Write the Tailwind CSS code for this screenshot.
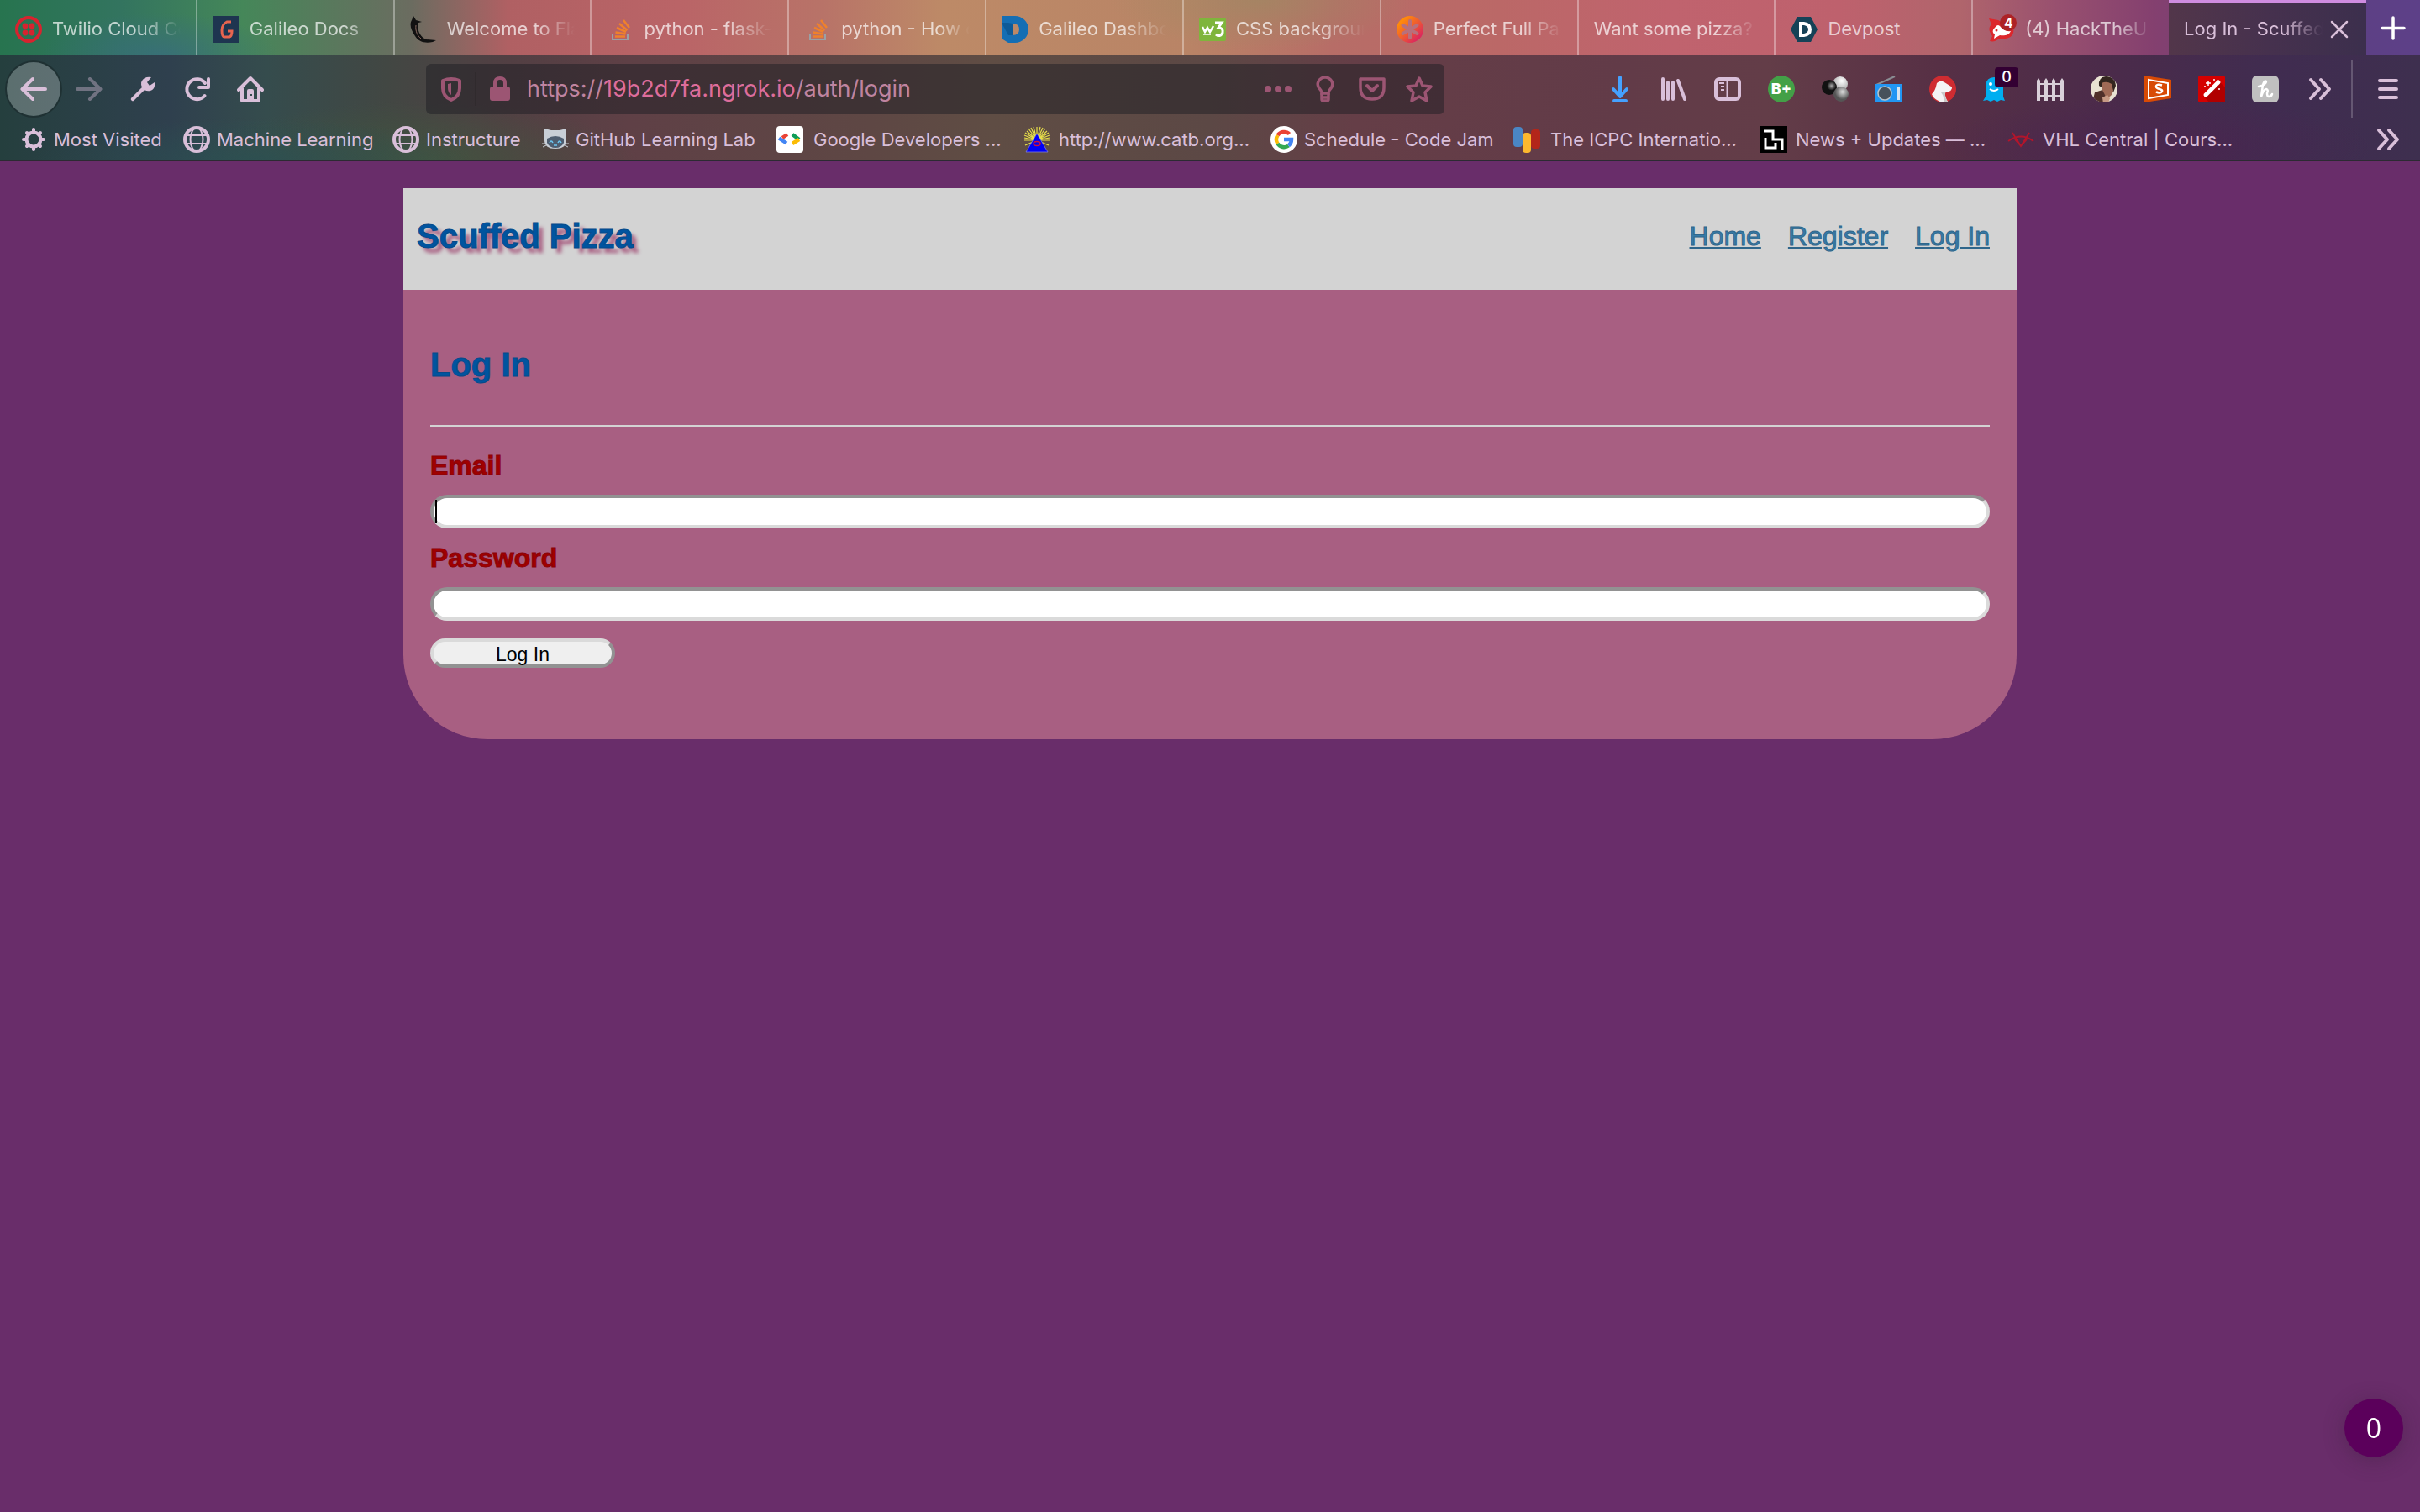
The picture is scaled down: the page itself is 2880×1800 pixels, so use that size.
<!DOCTYPE html>
<html lang="en">
<head>
  <meta charset="UTF-8" />
  <meta name="viewport" content="width=device-width, initial-scale=1.0" />
  <title>Log In - Scuffed Pizza</title>
  <script src="https://cdn.jsdelivr.net/npm/@tailwindcss/browser@4"></script>
</head>
<body class="min-h-screen bg-[#692d6a] font-['Liberation_Sans',Arial,sans-serif]">

  <!-- Browser window -->
  <header class="border-b-2 border-[#2c2a32] font-[Inter,sans-serif] text-[#d9bfd9]">

    <!-- Tabs -->
    <div class="flex h-[65px] bg-[radial-gradient(140px_50px_at_190px_65px,#386d7ccc,transparent),radial-gradient(180px_60px_at_1500px_0px,#9c8a62aa,transparent),linear-gradient(90deg,#27744f_0%,#33745f_5%,#458759_10%,#6b6c60_17%,#b06063_21%,#ba6467_28%,#b87368_34%,#bd8a67_39%,#b98466_49%,#b76d67_55%,#bb6867_62%,#c0636e_69%,#be616d_76%,#b0656c_81%,#98506f_85%,#84406f_89%,#5d4083_96%,#5d4088_100%)] text-[22px]">
      <div class="flex h-full min-w-0 flex-1">
        <button class="flex min-w-0 flex-1 basis-0 items-center gap-3 border-r-2 border-white/35 pt-1 pr-[18px] pl-[18px] text-left text-white/70">
          <svg class="size-8 shrink-0" viewBox="0 0 32 32" fill="#d8232f"><circle cx="16" cy="16" r="14" fill="none" stroke="#d8232f" stroke-width="4"/><circle cx="12" cy="12" r="3.4"/><circle cx="20" cy="12" r="3.4"/><circle cx="12" cy="20" r="3.4"/><circle cx="20" cy="20" r="3.4"/></svg>
          <span class="min-w-0 flex-1 overflow-hidden whitespace-nowrap [mask-image:linear-gradient(to_right,#000_70%,transparent)]">Twilio Cloud Co</span>
        </button>
        <button class="flex min-w-0 flex-1 basis-0 items-center gap-3 border-r-2 border-white/35 pt-1 pr-[18px] pl-[18px] text-left text-white/70">
          <svg class="size-8 shrink-0" viewBox="0 0 32 32"><path fill="#1e3550" d="M0 0h32v32H0z"/><path d="M22 7h-5q-6 3-6 10 0 8 3 8h6q3-1 3-7h-5" fill="none" stroke="#e8644f" stroke-width="3"/></svg>
          <span class="min-w-0 flex-1 overflow-hidden whitespace-nowrap [mask-image:linear-gradient(to_right,#000_75%,transparent)]">Galileo Docs</span>
        </button>
        <button class="flex min-w-0 flex-1 basis-0 items-center gap-3 border-r-2 border-white/35 pt-1 pr-[18px] pl-[18px] text-left text-white/70">
          <svg class="size-8 shrink-0" viewBox="0 0 32 32"><path d="M4 0l3 5 7 2-4 1c-2 8 1 16 9 20l12 1-4 2c-9 2-17 0-21-7C1 17-1 10 2 5z" fill="#111"/><path d="M7 11c-1 7 2 13 6 16" stroke="#8a6b62" fill="none"/></svg>
          <span class="min-w-0 flex-1 overflow-hidden whitespace-nowrap [mask-image:linear-gradient(to_right,#000_70%,transparent)]">Welcome to Fla</span>
        </button>
        <button class="flex min-w-0 flex-1 basis-0 items-center gap-3 border-r-2 border-white/35 pt-1 pr-[18px] pl-[18px] text-left text-white/70">
          <svg class="size-8 shrink-0" viewBox="0 0 32 32" fill="none"><path d="M7 21v7h18v-7" stroke="#9aa1a6" stroke-width="2"/><path d="M10 24.500h12M10.500 19.500l12 2M12 14l11 5M15 9l9.500 8M20 5l7 9" stroke="#f0812b" stroke-width="2.500"/></svg>
          <span class="min-w-0 flex-1 overflow-hidden whitespace-nowrap [mask-image:linear-gradient(to_right,#000_65%,transparent)]">python - flask-l</span>
        </button>
        <button class="flex min-w-0 flex-1 basis-0 items-center gap-3 border-r-2 border-white/35 pt-1 pr-[18px] pl-[18px] text-left text-white/70">
          <svg class="size-8 shrink-0" viewBox="0 0 32 32" fill="none"><path d="M7 21v7h18v-7" stroke="#9aa1a6" stroke-width="2"/><path d="M10 24.500h12M10.500 19.500l12 2M12 14l11 5M15 9l9.500 8M20 5l7 9" stroke="#f0812b" stroke-width="2.500"/></svg>
          <span class="min-w-0 flex-1 overflow-hidden whitespace-nowrap [mask-image:linear-gradient(to_right,#000_75%,transparent)]">python - How c</span>
        </button>
        <button class="flex min-w-0 flex-1 basis-0 items-center gap-3 border-r-2 border-white/35 pt-1 pr-[18px] pl-[18px] text-left text-white/70">
          <svg class="size-8 shrink-0" viewBox="0 0 32 32"><path fill-rule="evenodd" d="M0 0h16a16 16 0 0 1 0 32H8L0 27zM13 9v14q8 0 8-7t-8-7z" fill="#146eb4"/><path d="M0 8l8 0 5 1v14H8z" fill="#0d5a98"/></svg>
          <span class="min-w-0 flex-1 overflow-hidden whitespace-nowrap [mask-image:linear-gradient(to_right,#000_65%,transparent)]">Galileo Dashbo</span>
        </button>
        <button class="flex min-w-0 flex-1 basis-0 items-center gap-3 border-r-2 border-white/35 pt-1 pr-[18px] pl-[18px] text-left text-white/70">
          <svg class="size-8 shrink-0" viewBox="0 0 32 32" fill="none" stroke="#fff"><rect y="2" width="32" height="28" rx="2" fill="#7fb53c" stroke="none"/><path d="M4 13l3 6 3-5 3 5 4-7" stroke-width="2.500"/><path d="M19 8h8l-4 6q6 0 5 6-3 6-8 2" stroke-width="3"/><path d="M5 22h9" stroke-width="1.500"/></svg>
          <span class="min-w-0 flex-1 overflow-hidden whitespace-nowrap [mask-image:linear-gradient(to_right,#000_65%,transparent)]">CSS backgroun</span>
        </button>
        <button class="flex min-w-0 flex-1 basis-0 items-center gap-3 border-r-2 border-white/35 pt-1 pr-[18px] pl-[18px] text-left text-white/70">
          <svg class="size-8 shrink-0" viewBox="0 0 32 32"><defs><linearGradient id="astGrad" x1="0" y1="0" x2="1" y2="1"><stop offset=".2" stop-color="#ff8a0a"/><stop offset=".9" stop-color="#d81e66"/></linearGradient></defs><circle cx="16" cy="16" r="16" fill="url(#astGrad)"/><path d="M16 6v20M7.500 11l17 10M24.500 11l-17 10" stroke="#b8707b" stroke-width="4" stroke-linecap="round"/></svg>
          <span class="min-w-0 flex-1 overflow-hidden whitespace-nowrap [mask-image:linear-gradient(to_right,#000_70%,transparent)]">Perfect Full Pa</span>
        </button>
        <button class="flex min-w-0 flex-1 basis-0 items-center gap-3 border-r-2 border-white/35 pt-1 pr-[18px] pl-[18px] text-left text-white/70">
          <span class="min-w-0 flex-1 overflow-hidden whitespace-nowrap [mask-image:linear-gradient(to_right,#000_75%,transparent)]">Want some pizza?</span>
        </button>
        <button class="flex min-w-0 flex-1 basis-0 items-center gap-3 border-r-2 border-white/35 pt-1 pr-[18px] pl-[18px] text-left text-white/70">
          <svg class="size-8 shrink-0" viewBox="0 0 32 32"><path d="M8 1h16l8 15-8 15H8L0 16z" fill="#154257"/><path fill-rule="evenodd" d="M10 7h6q9 1 9 9t-9 9h-6zM14 11v10h2q5-1 5-5t-5-5z" fill="#fff"/></svg>
          <span class="min-w-0 flex-1 overflow-hidden whitespace-nowrap">Devpost</span>
        </button>
        <button class="flex min-w-0 flex-1 basis-0 items-center gap-3 pt-1 pr-[18px] pl-[18px] text-left text-white/70">
          <span class="relative size-8 shrink-0">
            <svg class="size-8" viewBox="0 0 32 32"><path d="M1 3l11 2 18 10c2 8-5 13-14 12-5 0-7 5-14 3l3-6c-6-8-3-12-1-14z" fill="#dc272c"/><path d="M8 14q3-5 6-2 5 7 13 6c-2 5-8 6-13 5l-7 4 1-5c-4-3-2-6 0-8z" fill="#fff"/><circle cx="10" cy="17" r="1.500" fill="#dc272c"/></svg>
            <span class="absolute -top-0.5 -right-0.5 size-5 rounded-full bg-[#ad2226] text-center text-base leading-5 font-semibold text-white">4</span>
          </span>
          <span class="min-w-0 flex-1 overflow-hidden whitespace-nowrap [mask-image:linear-gradient(to_right,#000_70%,transparent)]">(4) HackTheU</span>
        </button>
        <div class="flex min-w-0 flex-1 basis-0 items-center gap-2 border-t-4 border-[#cf8ce0] bg-[linear-gradient(90deg,#52364a,#46314e_50%,#3c2f4d)] pr-5 pl-[18px]">
          <span class="min-w-0 flex-1 overflow-hidden whitespace-nowrap [mask-image:linear-gradient(to_right,#000_70%,transparent)]">Log In - Scuffed</span>
          <button aria-label="Close tab"><svg class="size-6" viewBox="0 0 24 24" stroke="currentColor" stroke-width="2.500" stroke-linecap="round"><path d="M3 3l18 18M21 3L3 21"/></svg></button>
        </div>
      </div>
      <button class="flex w-16 shrink-0 items-center justify-center text-white" aria-label="New tab">
        <svg class="size-8" viewBox="0 0 32 32" stroke="currentColor" stroke-width="3.500" stroke-linecap="round"><path d="M16 4v25M3 16.500h26"/></svg>
      </button>
    </div>

    <div class="border-t border-black/30 bg-[radial-gradient(260px_50px_at_300px_125px,#2b5052cc,transparent),radial-gradient(260px_70px_at_500px_125px,#40573fcc,transparent),radial-gradient(260px_60px_at_2560px_110px,#4a2450cc,transparent),linear-gradient(90deg,#253f3e_0%,#2f404e_7%,#354c4d_11%,#424743_16%,#523f43_21%,#5f4046_26%,#5e4744_36%,#5f4d44_41%,#5c4845_50%,#653e47_56%,#623b48_67%,#633d48_73%,#573045_80%,#4b2b4a_87%,#402c50_94%,#3e2f4f_100%)]">

      <!-- Toolbar -->
      <div class="mb-1 flex h-20 items-center pr-[22px] pl-2">
        <div class="flex items-center">
          <button class="mr-0.5 flex size-16 items-center justify-center rounded-full bg-white/25 ring-2 ring-[#1f3133]" aria-label="Back">
            <svg class="size-8" viewBox="0 0 32 32" fill="none" stroke="currentColor" stroke-width="4" stroke-linecap="round" stroke-linejoin="round"><path d="M30 16H3M15 4L2.500 16 15 28"/></svg>
          </button>
          <button class="flex size-16 items-center justify-center opacity-40" aria-label="Forward">
            <svg class="size-8" viewBox="0 0 32 32" fill="none" stroke="currentColor" stroke-width="4" stroke-linecap="round" stroke-linejoin="round"><path d="M2 16h27M17 4l12.500 12L17 28"/></svg>
          </button>
          <button class="flex size-16 items-center justify-center" aria-label="Developer">
            <svg class="size-8" viewBox="0 0 32 32"><path d="M4 28L19 13" stroke="currentColor" stroke-width="4.500" stroke-linecap="round"/><path d="M26 2l-5 6 3 4 6-4q1 8-5 10-4 1-7-1l-3-3q-3-7 3-11 4-2 8-1z" fill="currentColor"/></svg>
          </button>
          <button class="flex size-16 items-center justify-center" aria-label="Reload">
            <svg class="size-8" viewBox="0 0 32 32" fill="none" stroke="currentColor" stroke-width="4" stroke-linecap="round"><path d="M25.500 24A12 12 0 1 1 26 9"/><path d="M30 4v10H19" stroke-linejoin="round"/></svg>
          </button>
          <button class="flex size-16 items-center justify-center" aria-label="Home">
            <svg class="size-8" viewBox="0 0 32 32" fill="none" stroke="currentColor" stroke-width="4" stroke-linecap="round" stroke-linejoin="round"><path d="M2 17L16 3l14 14M6 15v15h20V15"/><path fill="currentColor" stroke="none" fill-rule="evenodd" d="M14 16h4q2 0 2 2v12h-8V18q0-2 2-2zm2 6v2h2v-2z"/></svg>
          </button>
        </div>

        <div class="ml-[177px] flex h-[60px] w-[1212px] items-center rounded-md bg-[#1e1e24]/50 pr-[14px] pl-[14px] text-[#9c5573]">
          <svg class="size-8" viewBox="0 0 32 32" fill="none" stroke="currentColor" stroke-width="4" stroke-linejoin="round"><path d="M16 4q5 0 10 2v9q0 10-10 14Q6 25 6 15V6q5-2 10-2z"/><path fill="currentColor" stroke="none" d="M16 9v14q-4-3-4-8v-5z"/></svg>
          <span class="mr-3 ml-3 h-10 w-0.5 bg-black/10"></span>
          <svg class="size-8" viewBox="0 0 32 32"><rect x="4" y="13" width="24" height="17" rx="3" fill="currentColor"/><path d="M10 14V9q0-6 6-6t6 6v5" fill="none" stroke="currentColor" stroke-width="4"/></svg>
          <div role="textbox" contenteditable="true" aria-label="Address" spellcheck="false" class="ml-4 flex-1 text-[27px] whitespace-nowrap text-[#bf84a0]">https://<span class="text-[#dd6d9b]">19b2d7fa.ngrok.io</span>/auth/login</div>
          <div class="flex gap-6">
            <button aria-label="Page actions"><svg class="size-8" viewBox="0 0 32 32" fill="currentColor"><circle cx="4" cy="16" r="4"/><circle cx="16" cy="16" r="4"/><circle cx="28" cy="16" r="4"/></svg></button>
            <button aria-label="Suggestions"><svg class="size-8" viewBox="0 0 32 32" fill="none" stroke="currentColor" stroke-width="3.500"><path d="M12 21q0-3-3-6-3-4-1-8 3-5 8-5t8 5q2 4-1 8-3 3-3 6z"/><path d="M12 21v7q0 2 2 2h4q2 0 2-2v-7M12 26h8"/></svg></button>
            <button aria-label="Save to Pocket"><svg class="size-8" viewBox="0 0 32 32" fill="none" stroke="currentColor" stroke-width="3.500" stroke-linecap="round" stroke-linejoin="round"><path d="M2 4h28v10q0 14-14 14T2 14z"/><path d="M10 12l6 6 6-6" stroke-width="4"/></svg></button>
            <button aria-label="Bookmark this page"><svg class="size-8" viewBox="0 0 32 32" fill="none" stroke="currentColor" stroke-width="3.500" stroke-linejoin="round"><path d="M16 3l4 9 10 1-7 7 2 10-9-5-9 5 2-10-7-7 10-1z"/></svg></button>
          </div>
        </div>

        <div class="ml-auto flex items-center gap-8">
          <svg class="size-8" viewBox="0 0 32 32" fill="none" stroke="#45a1ff" stroke-width="4" stroke-linecap="round" stroke-linejoin="round"><path d="M16 2v22M8 16l8 9 8-9M9 30h14"/></svg>
          <svg class="size-8" viewBox="0 0 32 32" stroke="currentColor" stroke-width="4" stroke-linecap="round"><path d="M3 4v24M9 8v20M15 8v20M21 6l8 22"/></svg>
          <svg class="size-8" viewBox="0 0 32 32" fill="none" stroke="currentColor"><rect x="2" y="4" width="28" height="24" rx="4" stroke-width="4"/><path d="M15.500 5v22" stroke-width="2"/><path d="M6 9h6M8 13h4M8 17h4" stroke-width="2"/></svg>
          <span class="size-8 rounded-full bg-[#43a047] text-center text-lg leading-8 font-extrabold text-white">B+</span>
          <svg class="size-8" viewBox="0 0 32 32"><defs><radialGradient id="bw" cx=".6" cy=".3"><stop offset="0" stop-color="#fff"/><stop offset="1" stop-color="#bbb"/></radialGradient><radialGradient id="bk" cx=".65" cy=".4"><stop offset="0" stop-color="#aaa"/><stop offset=".6" stop-color="#111"/></radialGradient><radialGradient id="bg" cx=".6" cy=".35"><stop offset="0" stop-color="#ddd"/><stop offset="1" stop-color="#555"/></radialGradient></defs><circle cx="22" cy="10" r="9" fill="url(#bw)"/><circle cx="9" cy="14" r="9" fill="url(#bk)"/><circle cx="23" cy="22" r="9" fill="url(#bg)"/></svg>
          <svg class="size-8" viewBox="0 0 32 32"><path d="M1 11L23 1" stroke="#8a8d93" stroke-width="2"/><path d="M0 10h32v22H0z" fill="#2196f3"/><circle cx="11" cy="21" r="8" fill="#47525c" stroke="#b9c4cc" stroke-width="1.500"/><rect x="25" y="13" width="4" height="16" fill="#d6e4f0"/></svg>
          <svg class="size-8" viewBox="0 0 32 32"><circle cx="16" cy="16" r="16" fill="#cf2c31"/><path d="M9 9q4-4 9-1l8 5q2 1 0 4-1 2-5 2-3 1-2 5 1 4 3 7-8 2-13-2-4-2-6-7 4-3 6-13z" fill="#f4f4f4"/><path d="M14 20l5-1q-1 6 3 12h-5q1-6-3-11z" fill="#c9c9c9"/></svg>
          <span class="relative size-8">
            <svg class="size-8" viewBox="0 0 32 32"><path d="M3 12Q4 2 13 2t11 10v13l2 5-5-1-4 2-4-2-4 2-4-2-5 1 3-5z" fill="#00aef0"/><circle cx="9" cy="10" r="2" fill="#fff"/><circle cx="17" cy="10" r="2" fill="#fff"/><path d="M8 16q5 4 10 0" stroke="#fff" stroke-width="2" fill="none"/></svg>
            <span class="absolute -top-2.5 left-3.5 h-6 w-7 rounded-sm bg-[#330033] text-center text-lg leading-6 font-medium text-white">0</span>
          </span>
          <svg class="size-8" viewBox="0 0 32 32" fill="#d9d0d9"><path d="M0 6l2-3 2 3v24H0zM9 6l2-3 2 3v24H9zM18 6l2-3 2 3v24h-4zM28 6l2-3 2 3v24h-4z"/><path d="M0 9h32v2H0zM0 23h32v3H0z"/></svg>
          <svg class="size-8" viewBox="0 0 32 32"><defs><clipPath id="face"><circle cx="16" cy="16" r="16"/></clipPath></defs><g clip-path="url(#face)"><path fill="#e9e2d2" d="M0 0h32v32H0z"/><path d="M10 12q-1-10 8-11 11 0 12 11l-3 8-14-6z" fill="#33261f"/><path d="M13 9q6-3 12 1l2 8q-2 8-8 8-6-5-6-17z" fill="#a06a56"/><path d="M2 32l3-12 9-3 5 10 3 5z" fill="#50302a"/><path d="M14 26l6-3 3 4-2 6h-6z" fill="#c79a85"/></g></svg>
          <svg class="size-8" viewBox="0 0 32 32" fill="none" stroke="#fff"><path d="M0 0l32 5v22L0 32z" fill="#d84a05" stroke="none"/><path d="M5 5l23 4v14L5 27z" stroke-width="2"/><path d="M21 11.500q-7-2-7 1.500 0 2 4 3t3 3q-2 2.500-7 .500" stroke-width="2.500"/></svg>
          <svg class="size-8" viewBox="0 0 32 32"><rect width="32" height="32" rx="2" fill="#d40000"/><path d="M26 8l6 6v18H13l-5-6z" fill="#b00000"/><path d="M9 23L24 8" stroke="#fff" stroke-width="5" stroke-linecap="round"/><path d="M12 6v6M9 9h6M19 4v3M25 15v2M7 13h2" stroke="#fff" stroke-width="1.500"/></svg>
          <svg class="size-8" viewBox="0 0 32 32" fill="none" stroke="#fff" stroke-width="2.500" stroke-linecap="round"><rect width="32" height="32" rx="6" fill="#c0c0c0" stroke="none"/><path d="M8 13q9-2 9-6-2-2-4 4l-2 14q3-9 6-9 3 1 1 5 0 4 2 4 3 0 4-3"/></svg>
          <svg class="size-8" viewBox="0 0 32 32" fill="none" stroke="currentColor" stroke-width="4" stroke-linecap="round" stroke-linejoin="round"><path d="M6 5l10 11L6 27M18 5l10 11-10 11"/></svg>
        </div>
        <span class="ml-[22px] h-[68px] w-0.5 bg-white/20"></span>
        <button class="ml-[26px]" aria-label="Menu">
          <svg class="size-8" viewBox="0 0 32 32" stroke="currentColor" stroke-width="4" stroke-linecap="round"><path d="M6 6h20M6 16h20M6 26h20"/></svg>
        </button>
      </div>

      <!-- Bookmarks -->
      <nav class="flex h-10 items-start pr-[22px] pl-6 text-[22px] leading-8 whitespace-nowrap">
        <a href="#" class="flex w-[194px] gap-2">
          <svg class="size-8" viewBox="0 0 32 32" fill="none" stroke="currentColor" stroke-width="4" stroke-linecap="round"><circle cx="16" cy="16" r="8.500"/><path d="M16 4v3M16 25v3M4 16h3M25 16h3M8 8l2 2M22 22l2 2M24 8l-2 2M8 24l2-2"/></svg>
          Most Visited</a>
        <a href="#" class="flex w-[249px] gap-2">
          <svg class="size-8" viewBox="0 0 32 32" fill="none" stroke="currentColor" stroke-width="2"><circle cx="16" cy="16" r="14" stroke-width="4"/><ellipse cx="16" cy="16" rx="7.500" ry="14"/><path d="M3 11h26M3 21h26"/></svg>
          Machine Learning</a>
        <a href="#" class="flex w-[178px] gap-2">
          <svg class="size-8" viewBox="0 0 32 32" fill="none" stroke="currentColor" stroke-width="2"><circle cx="16" cy="16" r="14" stroke-width="4"/><ellipse cx="16" cy="16" rx="7.500" ry="14"/><path d="M3 11h26M3 21h26"/></svg>
          Instructure</a>
        <a href="#" class="flex w-[279px] gap-2">
          <svg class="size-8" viewBox="0 0 32 32"><path d="M3 3l8 2h10l8-2v14q0 10-13 10T3 17z" fill="#c8ced6"/><path d="M6 15q10-6 20 0v5q-3 6-10 6T6 20z" fill="#4e5d70"/><path d="M9 20q2-4 4 0M19 20q2-4 4 0M14 23h4" stroke="#6cc5f0" stroke-width="1.500" fill="none"/><path d="M0 21h4M28 21h4M1 25l4-2M27 23l4 2" stroke="#c8ced6"/></svg>
          GitHub Learning Lab</a>
        <a href="#" class="flex w-[294px] gap-3">
          <svg class="size-8" viewBox="0 0 32 32" fill="none" stroke-width="4.500"><rect width="32" height="32" rx="4" fill="#fff"/><path d="M13 10l-6 4" stroke="#ea4335"/><path d="M3 14.500l9 6" stroke="#4285f4"/><path d="M19 10l8 6" stroke="#0f9d58"/><path d="M27 16l-8 5" stroke="#fbbc04"/></svg>
          Google Developers ...</a>
        <a href="#" class="flex w-[294px] gap-2.5">
          <svg class="size-8" viewBox="0 0 32 32"><path d="M16 17V1M16 17L9 2M16 17l7-15M16 17L4 6M16 17L28 6M16 17L1 11M16 17l15-6M16 17L1 17M16 17h15M16 17L2 23M16 17l14 6M16 17L12 1M16 17l4-16M16 17L6 3M16 17L26 3M16 17L2 8M16 17l14-9M16 17L1 14M16 17l15-3" stroke="#e8e04a" stroke-width="1.200"/><path d="M16 9l13 22H3z" fill="#0000f5" stroke="#7d7de0" stroke-width=".800"/><ellipse cx="16" cy="21" rx="4" ry="2.500" fill="none" stroke="#d0103a" stroke-width="1.500"/></svg>
          http://www.catb.org...</a>
        <a href="#" class="flex w-[289px] gap-2">
          <svg class="size-8" viewBox="0 0 32 32" fill="none" stroke-width="4.500"><circle cx="16" cy="16" r="16" fill="#fff"/><path d="M22.500 9.500A9.200 9.200 0 0 0 8.500 11" stroke="#ea4335"/><path d="M8.500 11a9.200 9.200 0 0 0 0 10" stroke="#fbbc05"/><path d="M8.500 21a9.200 9.200 0 0 0 13 2.500" stroke="#34a853"/><path d="M21.500 23.500q3.500-3 3.500-7.500h-9" stroke="#4285f4"/></svg>
          Schedule - Code Jam</a>
        <a href="#" class="flex w-[294px] gap-3">
          <svg class="size-8" viewBox="0 0 32 32"><rect x="0" y="1" width="11" height="24" rx="4" fill="#4a86c5"/><rect x="21" y="4" width="11" height="23" rx="4" fill="#b3261a"/><rect x="11" y="8" width="10" height="24" rx="4" fill="#fdb82e"/></svg>
          The ICPC Internatio...</a>
        <a href="#" class="flex w-[294px] gap-2.5">
          <svg class="size-8" viewBox="0 0 32 32" fill="none" stroke="#fff" stroke-width="3"><path d="M0 0h32v32H0z" fill="#000" stroke="none"/><path d="M4 6h11v10h11v12M6 14v12h12v-6"/></svg>
          News + Updates — ...</a>
        <a href="#" class="flex gap-2.5">
          <svg class="size-8" viewBox="0 0 32 32" fill="none" stroke="#b3152b" stroke-width="1.800"><path d="M1 18q15-11 30 0M6 8l10 16L26 8M9 16l7 8 7-8"/></svg>
          VHL Central | Cours...</a>
        <button class="ml-auto" aria-label="More bookmarks">
          <svg class="size-8" viewBox="0 0 32 32" fill="none" stroke="currentColor" stroke-width="4" stroke-linecap="round" stroke-linejoin="round"><path d="M5 5l10 11L5 27M17 5l10 11-10 11"/></svg>
        </button>
      </nav>
    </div>
  </header>

  <!-- Page -->
  <main class="mx-auto mt-8 max-w-[1920px]">
    <nav class="flex items-center bg-[#d3d3d3] pt-[33px] pr-8 pb-10 pl-4">
      <h1 class="flex-1 text-[40px] leading-[48px] font-bold text-[#00549f] [-webkit-text-stroke:1px_#064a8a] [text-shadow:6px_6px_4px_#a85f82]">Scuffed Pizza</h1>
      <ul class="flex gap-8 text-[32px] leading-10 text-[#377ba8] [-webkit-text-stroke:1px_#2f668b]">
        <li><a href="#" class="underline">Home</a></li>
        <li><a href="#" class="underline">Register</a></li>
        <li><a href="#" class="underline">Log In</a></li>
      </ul>
    </nav>

    <section class="rounded-b-[100px] bg-[#a85f82] px-8 pt-[65px] pb-[85px]">
      <h2 class="border-b-2 border-[#d3d3d3] pb-12 text-[40px] leading-[48px] font-bold text-[#00549f] [-webkit-text-stroke:1px_#064a8a]">Log In</h2>
      <form class="flex flex-col gap-4 pt-[27px]" onsubmit="return false">
        <label for="email" class="text-[32px] leading-[38px] font-bold text-[#a00000] [-webkit-text-stroke:1px_#8a0208]">Email</label>
        <div class="relative">
          <input type="email" id="email" class="block h-10 w-full rounded-[20px] border-4 border-t-[#929292] border-r-[#dadada] border-b-[#dadada] border-l-[#929292] bg-white px-1 outline-none" />
          <span class="absolute top-1.5 left-1.5 h-7 w-0.5 bg-black"></span>
        </div>
        <label for="password" class="text-[32px] leading-[38px] font-bold text-[#a00000] [-webkit-text-stroke:1px_#8a0208]">Password</label>
        <input type="password" id="password" class="block h-10 w-full rounded-[20px] border-4 border-t-[#929292] border-r-[#dadada] border-b-[#dadada] border-l-[#929292] bg-white px-1 outline-none" />
        <button type="submit" class="mt-[5px] h-[35px] w-[220px] rounded-[20px] border-4 border-t-[#dadada] border-r-[#929292] border-b-[#929292] border-l-[#dadada] bg-[#efefef] pt-0.5 text-[23px] leading-6 text-black">Log In</button>
      </form>
    </section>
  </main>

  <button class="fixed right-5 bottom-[65px] size-[70px] rounded-full bg-[#5b005b] font-['Open_Sans',sans-serif] text-[32px] text-white shadow-[0_4px_24px_rgba(60,30,60,0.4)]">0</button>
</body>
</html>
